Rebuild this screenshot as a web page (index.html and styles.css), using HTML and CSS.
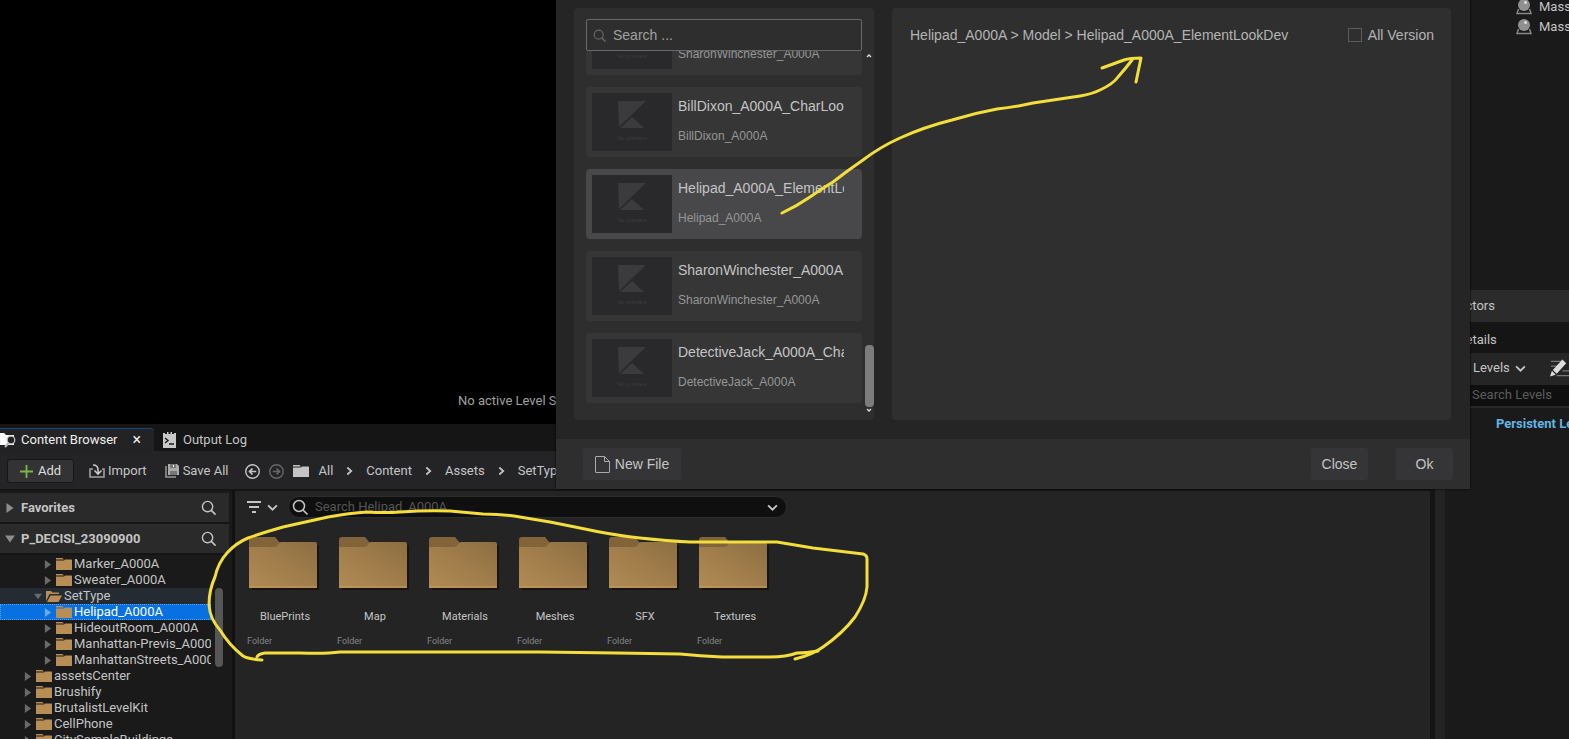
FILE: index.html
```html
<!DOCTYPE html>
<html lang="en">
<head>
 <meta charset="UTF-8">
 <meta name="viewport" content="width=device-width, initial-scale=1.0">
 <title>Content Browser</title>
 <link rel="stylesheet" href="styles.css">
</head>
<body>
 <svg class="sprite" aria-hidden="true">
 <symbol id="i-search" viewBox="0 0 16 16"><circle cx="7" cy="7" r="5.5" fill="none" stroke="currentColor" stroke-width="1.5"/><path d="M11 11l4 4" stroke="currentColor" stroke-width="1.7" stroke-linecap="round"/></symbol>
 <symbol id="i-folder" viewBox="0 0 16 12"><path d="M0 0h6.500l1.500 1.500H0zM0 2.500h8l1-1h6.500l.5.500V12H0z" fill="currentColor"/></symbol>
 <symbol id="i-folder-open" viewBox="0 0 16 12"><path d="M0 11V1h5l1.500 1.500H13V4H3.500zM1 12l3.500-6.500H16L12.500 12z" fill="currentColor"/></symbol>
 <symbol id="i-right" viewBox="0 0 7 10"><path d="M0 0l7 5-7 5z" fill="currentColor"/></symbol>
 <symbol id="i-down" viewBox="0 0 10 7"><path d="M0 0h10L5 7z" fill="currentColor"/></symbol>
 <symbol id="i-chev-right" viewBox="0 0 8 10"><path d="M1.500 1l4.500 4-4.500 4" fill="none" stroke="currentColor" stroke-width="2"/></symbol>
 <symbol id="i-chev-down" viewBox="0 0 10 8"><path d="M1 2l4 4 4-4" fill="none" stroke="currentColor" stroke-width="1.700"/></symbol>
 <symbol id="i-arrow-circle" viewBox="0 0 16 16"><circle cx="8" cy="8" r="7.200" fill="none" stroke="currentColor" stroke-width="1.500"/><path d="M12 8H5M8 4.800L4.800 8 8 11.200" fill="none" stroke="currentColor" stroke-width="1.800"/></symbol>
 <symbol id="i-big-folder" viewBox="0 0 72 54">
 <path d="M3 8h67v45H3z" fill="#15100a" opacity=".8"/>
 <path d="M0 3q0-3 3-3h23l5 6-4 6H0z" fill="#82643a"/>
 <path d="M0 10h25q3 0 4-2.500t3-2.500h34q2 0 2 2v44H0z" fill="url(#folder-face)"/>
 <path d="M0 50h68" stroke="#c59c62" stroke-width="1"/>
 </symbol>
 <symbol id="i-mass" viewBox="0 0 16 16"><path d="M2.500 10L1 14.500h14L13.500 10" fill="none" stroke="#888" stroke-width="1.500"/><circle cx="8" cy="6" r="6" fill="#909090"/><circle cx="9.500" cy="3.500" r="1.500" fill="#ddd"/></symbol>
 <symbol id="i-thumb" viewBox="0 0 80 40"><path d="M26 8h28L27 34zM28 35l12-11 12 11z" fill="#3b3b3d"/></symbol>
 <linearGradient id="folder-face" x1="0" y1="1" x2="1" y2="0"><stop offset="0" stop-color="#b08b55"/><stop offset=".5" stop-color="#a17d4b"/><stop offset="1" stop-color="#8b6e41"/></linearGradient>
 </svg>

 <div class="editor">
 <main class="workspace">
 <section class="viewport"><p>No active Level Sequencer</p></section>

 <section class="browser">
 <nav class="tabs">
 <button class="tab active">
 <svg class="tab-icon wide" viewBox="0 0 16 16"><path d="M0 1h4l2 2h8v10H0z" fill="#fff"/><circle cx="11" cy="8" r="3.800" fill="#232325" stroke="#bbb" stroke-width="1.300"/><path d="M8.500 11L5 15" stroke="#bbb" stroke-width="2"/></svg>
 <span>Content Browser</span><span class="close">×</span>
 </button>
 <button class="tab">
 <svg class="tab-icon" viewBox="0 0 13 16"><path d="M0 1h2v1h2V0h1.500v2h2V0H9v2h2V1h2v15H0z" fill="#c8c8c8"/><path d="M2 6l3 2.500L2 11M6 12h5" fill="none" stroke="#1a1a1a" stroke-width="1.400"/></svg>
 <span>Output Log</span>
 </button>
 </nav>

 <div class="toolbar">
 <button class="add"><svg viewBox="0 0 14 14"><path d="M7 0v14M0 7h14" stroke="#7fb24b" stroke-width="2"/></svg>Add</button>
 <button class="tool import"><svg viewBox="0 0 16 14"><path d="M4 5H1v8h14V5h-2" fill="none" stroke="#a0a0a0" stroke-width="1.600"/><path d="M4 1q5 0 5 5v3M5.500 6.500L9 10l3.500-3.500" fill="none" stroke="#c8c8c8" stroke-width="1.600"/></svg>Import</button>
 <button class="tool save"><svg viewBox="0 0 14 14"><path d="M1 2v11h10" fill="none" stroke="#999" stroke-width="1.500"/><path d="M3 0h9l2 2v9H3z" fill="#aaa"/><path d="M5 0h6v4H5zM5 7h7v4H5z" fill="#777"/><path d="M8.500 1v2" stroke="#eee"/></svg>Save All</button>
 <button class="round" aria-label="Back"><svg><use href="#i-arrow-circle"/></svg></button>
 <button class="round forward" aria-label="Forward"><svg><use href="#i-arrow-circle"/></svg></button>
 <div class="crumbs">
 <svg class="crumb-folder"><use href="#i-folder"/></svg>
 <a href="#">All</a><svg class="sep"><use href="#i-chev-right"/></svg>
 <a href="#">Content</a><svg class="sep"><use href="#i-chev-right"/></svg>
 <a href="#">Assets</a><svg class="sep"><use href="#i-chev-right"/></svg>
 <a href="#">SetType</a>
 </div>
 </div>

 <div class="panes">
 <aside class="sources">
 <div class="source-head"><svg class="caret"><use href="#i-right"/></svg><h2>Favorites</h2><button aria-label="Search favorites"><svg><use href="#i-search"/></svg></button></div>
 <div class="source-head"><svg class="caret"><use href="#i-down"/></svg><h2>P_DECISI_23090900</h2><button aria-label="Search project"><svg><use href="#i-search"/></svg></button></div>
 <div class="tree-wrap">
 <ul class="tree">
 <li class="lvl3"><svg class="caret"></svg><svg class="fold"><use href="#i-folder"/></svg></li>
 <li class="lvl3"><svg class="caret"><use href="#i-right"/></svg><svg class="fold"><use href="#i-folder"/></svg><span>Marker_A000A</span></li>
 <li class="lvl3"><svg class="caret"><use href="#i-right"/></svg><svg class="fold"><use href="#i-folder"/></svg><span>Sweater_A000A</span></li>
 <li class="lvl2 parent"><svg class="caret"><use href="#i-down"/></svg><svg class="fold"><use href="#i-folder-open"/></svg><span>SetType</span></li>
 <li class="lvl3 selected"><svg class="caret"><use href="#i-right"/></svg><svg class="fold"><use href="#i-folder"/></svg><span>Helipad_A000A</span></li>
 <li class="lvl3"><svg class="caret"><use href="#i-right"/></svg><svg class="fold"><use href="#i-folder"/></svg><span>HideoutRoom_A000A</span></li>
 <li class="lvl3"><svg class="caret"><use href="#i-right"/></svg><svg class="fold"><use href="#i-folder"/></svg><span>Manhattan-Previs_A000A</span></li>
 <li class="lvl3"><svg class="caret"><use href="#i-right"/></svg><svg class="fold"><use href="#i-folder"/></svg><span>ManhattanStreets_A000A</span></li>
 <li class="lvl1"><svg class="caret"><use href="#i-right"/></svg><svg class="fold"><use href="#i-folder"/></svg><span>assetsCenter</span></li>
 <li class="lvl1"><svg class="caret"><use href="#i-right"/></svg><svg class="fold"><use href="#i-folder"/></svg><span>Brushify</span></li>
 <li class="lvl1"><svg class="caret"><use href="#i-right"/></svg><svg class="fold"><use href="#i-folder"/></svg><span>BrutalistLevelKit</span></li>
 <li class="lvl1"><svg class="caret"><use href="#i-right"/></svg><svg class="fold"><use href="#i-folder"/></svg><span>CellPhone</span></li>
 <li class="lvl1"><svg class="caret"><use href="#i-right"/></svg><svg class="fold"><use href="#i-folder"/></svg><span>CitySampleBuildings</span></li>
 </ul>
 <div class="tree-scroll"><div class="tree-thumb"></div></div>
 </div>
 </aside>

 <div class="assets">
 <div class="filter-row">
 <button class="filter" aria-label="Filter">
 <svg class="lines" viewBox="0 0 14 12"><path d="M0 1h14M2 6h10M5 11h4" stroke="currentColor" stroke-width="2"/></svg>
 <svg class="chev"><use href="#i-chev-down"/></svg>
 </button>
 <div class="asset-search">
 <svg class="mag"><use href="#i-search"/></svg>
 <input type="text" aria-label="Search assets" placeholder="Search Helipad_A000A">
 <svg class="chev"><use href="#i-chev-down"/></svg>
 </div>
 </div>
 <div class="tiles">
 <div class="tile"><svg><use href="#i-big-folder"/></svg><h3>BluePrints</h3><p>Folder</p></div>
 <div class="tile"><svg><use href="#i-big-folder"/></svg><h3>Map</h3><p>Folder</p></div>
 <div class="tile"><svg><use href="#i-big-folder"/></svg><h3>Materials</h3><p>Folder</p></div>
 <div class="tile"><svg><use href="#i-big-folder"/></svg><h3>Meshes</h3><p>Folder</p></div>
 <div class="tile"><svg><use href="#i-big-folder"/></svg><h3>SFX</h3><p>Folder</p></div>
 <div class="tile"><svg><use href="#i-big-folder"/></svg><h3>Textures</h3><p>Folder</p></div>
 </div>
 </div>
 </div>
 </section>
 </main>

 <aside class="side">
 <ul class="outliner">
 <li><svg><use href="#i-mass"/></svg>Mass</li>
 <li><svg><use href="#i-mass"/></svg>Mass</li>
 </ul>
 <div class="side-status">Actors</div>
 <div class="side-tab">Details</div>
 <div class="side-tools">
 <button>Levels <svg class="chev"><use href="#i-chev-down"/></svg></button>
 <svg class="pencil" viewBox="0 0 22 18"><path d="M1 2h12M1 7h7M13 12h9M7 17h15" stroke="#777" stroke-width="1.300"/><path d="M0 18l2-6 4 4zM3 11L13 0l4 4L7 15z" fill="#ddd"/></svg>
 </div>
 <input class="side-search" type="text" aria-label="Search levels" placeholder="Search Levels">
 <div class="levels">Persistent Level</div>
 </aside>
 </div>

 <div class="dialog" role="dialog" aria-label="Open file">
 <div class="dialog-body">
 <section class="picker">
 <div class="picker-search">
 <svg><use href="#i-search"/></svg>
 <input type="text" aria-label="Search" placeholder="Search ...">
 </div>
 <div class="picker-list">
 <div class="cards">
 <article class="card"><div class="thumb"><svg><use href="#i-thumb"/></svg><small>No preview</small></div><div class="info"><h3>SharonWinchester_A000A</h3><p>SharonWinchester_A000A</p></div></article>
 <article class="card"><div class="thumb"><svg><use href="#i-thumb"/></svg><small>No preview</small></div><div class="info"><h3>BillDixon_A000A_CharLookDev</h3><p>BillDixon_A000A</p></div></article>
 <article class="card current"><div class="thumb"><svg><use href="#i-thumb"/></svg><small>No preview</small></div><div class="info"><h3>Helipad_A000A_ElementLookDev</h3><p>Helipad_A000A</p></div></article>
 <article class="card"><div class="thumb"><svg><use href="#i-thumb"/></svg><small>No preview</small></div><div class="info"><h3>SharonWinchester_A000A</h3><p>SharonWinchester_A000A</p></div></article>
 <article class="card"><div class="thumb"><svg><use href="#i-thumb"/></svg><small>No preview</small></div><div class="info"><h3>DetectiveJack_A000A_CharLookDev</h3><p>DetectiveJack_A000A</p></div></article>
 </div>
 <div class="scrollbar">
 <svg viewBox="0 0 6 5"><path d="M1 4l2-2 2 2" fill="none" stroke="#ddd" stroke-width="1.300"/></svg>
 <div class="scroll-thumb"></div>
 <svg viewBox="0 0 6 5"><path d="M1 1l2 2 2-2" fill="none" stroke="#ddd" stroke-width="1.300"/></svg>
 </div>
 </div>
 </section>
 <section class="versions">
 <p>Helipad_A000A &gt; Model &gt; Helipad_A000A_ElementLookDev</p>
 <label><input type="checkbox">All Version</label>
 </section>
 </div>
 <footer class="dialog-foot">
 <button class="new-file"><svg viewBox="0 0 15 17"><path d="M1 .5h8.500l5 5V16q0 .5-.5.500H1q-.5 0-.5-.5V1q0-.5.5-.5zM9.500.5v5h5" fill="none" stroke="#aaa"/></svg>New File</button>
 <button>Close</button>
 <button>Ok</button>
 </footer>
 </div>

 <!-- hand-drawn marks over the window -->
 <svg class="marks" aria-hidden="true">
 <path d="M782 213Q797 206 810 197T833 182Q847 171 863 160Q880 147 900 138Q924 127 952 120Q975 113 997 109Q1016 107 1033 103L1080 96Q1092 94 1100 90Q1113 84 1118 77Q1126 68 1132 60"/>
 <path d="M1102 68L1124 60Q1130 58 1141 58L1136 82"/>
 <path d="M262 660Q248 659 243 656Q229 645 220 630Q210 619 209 605Q209 590 215 577Q218 563 227 553Q236 543 248 538Q265 532 283 527L328 517Q350 513 367 512Q384 513 400 512Q428 510 450 511L483 514Q503 514 520 517L550 522L580 528Q612 535 640 538Q668 541 690 542H777L813 548L863 554Q867 555 867 559V587Q866 600 855 617Q843 633 823 647Q812 655 795 659"/>
 <path d="M818 651Q806 653 797 653Q786 657 770 657H722Q700 656 680 654L617 653L540 652H340Q325 654 300 653H265Q258 654 257 657"/>
 </svg>
</body>
</html>
```
FILE: styles.css
```css
* {
margin: 0;
padding: 0;
box-sizing: border-box;
}

body {
height: 100vh;
overflow: hidden;
position: relative;
background: #000;
color: #c4c4c4;
font-family: Roboto, sans-serif;
font-size: 13px;
line-height: 16px;
}

button, input {
font: inherit;
color: inherit;
background: none;
border: none;
outline: none;
}

button {
display: flex;
align-items: center;
white-space: nowrap;
}

h2, h3 {
font-size: inherit;
font-weight: 400;
}

ul {
list-style: none;
}

a {
color: inherit;
text-decoration: none;
}

svg {
flex-shrink: 0;
}

.sprite {
position: absolute;
width: 0;
height: 0;
}

.editor {
display: flex;
height: 100%;
}

.workspace {
flex: 1;
min-width: 0;
display: flex;
flex-direction: column;
}

.viewport {
flex: 0 0 424px;
background: #000;
padding: 393px 0 0 458px;
color: #a0a0a0;
white-space: nowrap;
}

/* content browser */

.browser {
flex: 1;
min-height: 0;
display: flex;
flex-direction: column;
background: #151515;
}

.tabs {
display: flex;
height: 27px;
flex-shrink: 0;
padding-top: 4px;
}

.tab {
padding: 0 9px;
gap: 7px;
}

.tab.active {
width: 154px;
padding: 0;
gap: 5px;
background: #232326;
border-top: 1px solid #17467a;
border-radius: 0 4px 0 0;
color: #eee;
}

.tab-icon {
width: 13px;
height: 16px;
}

.tab-icon.wide {
width: 16px;
}

.close {
margin-left: 10px;
font-size: 16px;
}

.toolbar {
display: flex;
align-items: center;
height: 38px;
flex-shrink: 0;
padding: 2px 0 0 7px;
background: #242427;
}

.add {
width: 67px;
height: 24px;
gap: 5px;
justify-content: center;
background: #333335;
border: 1px solid #161616;
border-radius: 3px;
color: #ddd;
}

.add svg {
width: 13px;
height: 13px;
}

.tool {
gap: 3px;
}

.import {
margin-left: 15px;
}

.import svg {
width: 16px;
height: 14px;
}

.save {
margin-left: 18px;
gap: 4px;
}

.save svg {
width: 14px;
height: 14px;
}

.round {
margin-left: 17px;
}

.round svg {
width: 15px;
height: 15px;
}

.round.forward {
margin-left: 9px;
color: #666;
transform: scaleX(-1);
}

.crumbs {
display: flex;
align-items: center;
gap: 13px;
margin-left: 9px;
}

.crumb-folder {
width: 16px;
height: 12px;
margin-right: -4px;
}

.sep {
width: 7px;
height: 10px;
}

.panes {
flex: 1;
min-height: 0;
display: flex;
border-top: 2px solid #151515;
}

.sources {
width: 235px;
flex-shrink: 0;
display: flex;
flex-direction: column;
background: #1a1a1a;
border-right: 3px solid #111;
padding-top: 2px;
}

.source-head {
display: flex;
align-items: center;
height: 31px;
flex-shrink: 0;
padding: 0 13px 0 5px;
margin-right: 3px;
background: #2a2a2a;
border-bottom: 2px solid #151515;
}

.source-head .caret {
width: 10px;
height: 10px;
color: #8c8c8c;
}

.source-head h2 {
flex: 1;
margin-left: 6px;
font-weight: 700;
}

.source-head button svg {
width: 15px;
height: 15px;
}

.tree-wrap {
flex: 1;
min-height: 0;
display: flex;
overflow: hidden;
}

.tree {
flex: 1;
min-width: 0;
margin-top: -15px;
}

.tree li {
display: flex;
align-items: center;
height: 16px;
overflow: hidden;
white-space: nowrap;
}

.tree .caret {
width: 8px;
height: 9px;
color: #6a6a6a;
}

.tree .fold {
width: 16px;
height: 12px;
margin: 0 2px 0 4px;
color: #b98e55;
}

.lvl1 {
padding-left: 24px;
}

.lvl2 {
padding-left: 34px;
}

.lvl3 {
padding-left: 44px;
}

.tree .parent {
background: #252b33;
}

.tree .selected {
background: #0870e0;
outline: 1px dotted #55a4ee;
outline-offset: -1px;
color: #fff;
}

.selected .caret {
color: #69a9e8;
}

.tree-scroll {
width: 21px;
padding: 33px 0 0 4px;
}

.tree-thumb {
width: 8px;
height: 79px;
background: #565656;
border-radius: 4px;
}

.assets {
flex: 1;
min-width: 0;
background: #242424;
border-right: 5px solid #151515;
padding: 5px 0 0 12px;
}

.filter-row {
display: flex;
align-items: center;
}

.filter {
gap: 6px;
}

.lines {
width: 14px;
height: 12px;
}

.chev {
width: 11px;
height: 9px;
}

.asset-search {
display: flex;
align-items: center;
width: 499px;
height: 22px;
margin-left: 10px;
padding: 0 8px 0 3px;
background: #0f0f0f;
border: 1px solid #2c2c2c;
border-radius: 11px;
}

.asset-search .mag {
width: 16px;
height: 16px;
}

.asset-search input {
flex: 1;
min-width: 0;
margin-left: 7px;
}

.asset-search input::placeholder {
color: #555;
}

.tiles {
display: flex;
padding-top: 19px;
margin-left: -7px;
}

.tile {
width: 90px;
font-size: 11px;
}

.tile svg {
display: block;
width: 72px;
height: 54px;
margin: 0 auto;
}

.tile h3 {
margin-top: 18px;
text-align: center;
}

.tile p {
margin: 8px 0 0 7px;
font-size: 9px;
color: #858585;
}

/* right hand panels */

.side {
width: 134px;
flex-shrink: 0;
display: flex;
flex-direction: column;
overflow: hidden;
background: #1a1a1a;
border-left: 10px solid #232323;
white-space: nowrap;
}

.outliner {
flex: 0 0 290px;
padding-left: 71px;
}

.outliner li {
display: flex;
align-items: center;
gap: 7px;
height: 20px;
margin-top: -3px;
margin-bottom: 3px;
}

.outliner svg {
width: 16px;
height: 16px;
}

.side-status {
padding: 8px 0 8px 12px;
background: #2b2b2b;
}

.side-tab {
padding: 10px 0 5px 12px;
background: #151515;
}

.side-tools {
display: flex;
align-items: center;
justify-content: space-between;
height: 32px;
padding: 0 0 2px 28px;
background: #252525;
}

.side-tools button {
gap: 5px;
}

.pencil {
width: 21px;
height: 18px;
margin-right: -2px;
}

.side-search {
height: 23px;
padding: 0 0 3px 27px;
background: #0f0f0f;
border-bottom: 2px solid #292929;
}

.side-search::placeholder {
color: #5c5c5c;
}

.levels {
padding: 8px 0 0 51px;
font-weight: 700;
color: #63b5e0;
}

/* file dialog, floats over the editor */

.dialog {
position: absolute;
top: 0;
left: 556px;
right: 99px;
background: #252525;
box-shadow: 0 0 2px #000;
font-family: "Liberation Sans", Arial, sans-serif;
font-size: 14px;
}

.dialog-body {
display: flex;
gap: 18px;
height: 439px;
padding: 8px 19px 19px 18px;
}

.picker {
width: 300px;
display: flex;
flex-direction: column;
padding: 11px 0 0 12px;
background: #2e2e2e;
border-radius: 4px;
}

.picker-search {
display: flex;
align-items: center;
height: 32px;
flex-shrink: 0;
margin-right: 12px;
padding: 0 6px;
border: 1px solid #696969;
border-radius: 2px;
}

.picker-search svg {
width: 13px;
height: 13px;
color: #666;
}

.picker-search input {
flex: 1;
min-width: 0;
margin-left: 7px;
}

.picker-search input::placeholder {
color: #a0a0a0;
}

.picker-list {
flex: 1;
min-height: 0;
display: flex;
gap: 2px;
}

.cards {
width: 276px;
display: flex;
flex-direction: column;
justify-content: flex-end;
gap: 12px;
padding-bottom: 17px;
overflow: hidden;
}

.card {
display: flex;
flex-shrink: 0;
height: 70px;
padding: 6px 18px 6px 6px;
background: #363637;
border-radius: 4px;
}

.card.current {
background: #48484a;
}

.thumb {
width: 80px;
height: 58px;
flex-shrink: 0;
background: #29292b;
text-align: center;
}

.thumb svg {
display: block;
width: 80px;
height: 40px;
}

.thumb small {
display: block;
font-size: 6px;
line-height: 10px;
color: #3c3c3e;
}

.info {
flex: 1;
min-width: 0;
margin-left: 6px;
padding-top: 5px;
white-space: nowrap;
}

.info h3 {
overflow: hidden;
}

.info p {
margin-top: 14px;
font-size: 12px;
color: #969696;
}

.scrollbar {
width: 10px;
display: flex;
flex-direction: column;
align-items: center;
padding: 2px 0 7px;
}

.scrollbar svg {
width: 6px;
height: 5px;
}

.scroll-thumb {
width: 9px;
height: 62px;
margin-top: auto;
margin-bottom: 1px;
background: #7c7c7c;
border-radius: 4px;
}

.versions {
flex: 1;
display: flex;
align-items: flex-start;
justify-content: space-between;
padding: 19px 17px 0 18px;
background: #2f2f2f;
border-radius: 4px;
color: #b4b4b4;
}

.versions label {
display: flex;
align-items: center;
gap: 6px;
}

.versions input {
appearance: none;
width: 14px;
height: 14px;
border: 1px solid #5c5c5c;
}

.dialog-foot {
display: flex;
align-items: center;
gap: 28px;
height: 50px;
padding: 0 17px 0 27px;
background: #2e2e2f;
}

.dialog-foot button {
height: 32px;
justify-content: center;
width: 57px;
background: #353537;
border-radius: 3px;
}

.dialog-foot .new-file {
width: 98px;
gap: 5px;
margin-right: auto;
}

.new-file svg {
width: 15px;
height: 17px;
}

.marks {
position: absolute;
inset: 0;
width: 100%;
height: 100%;
pointer-events: none;
fill: none;
stroke: #f3de3c;
stroke-width: 3;
stroke-linecap: round;
stroke-linejoin: round;
}
```
